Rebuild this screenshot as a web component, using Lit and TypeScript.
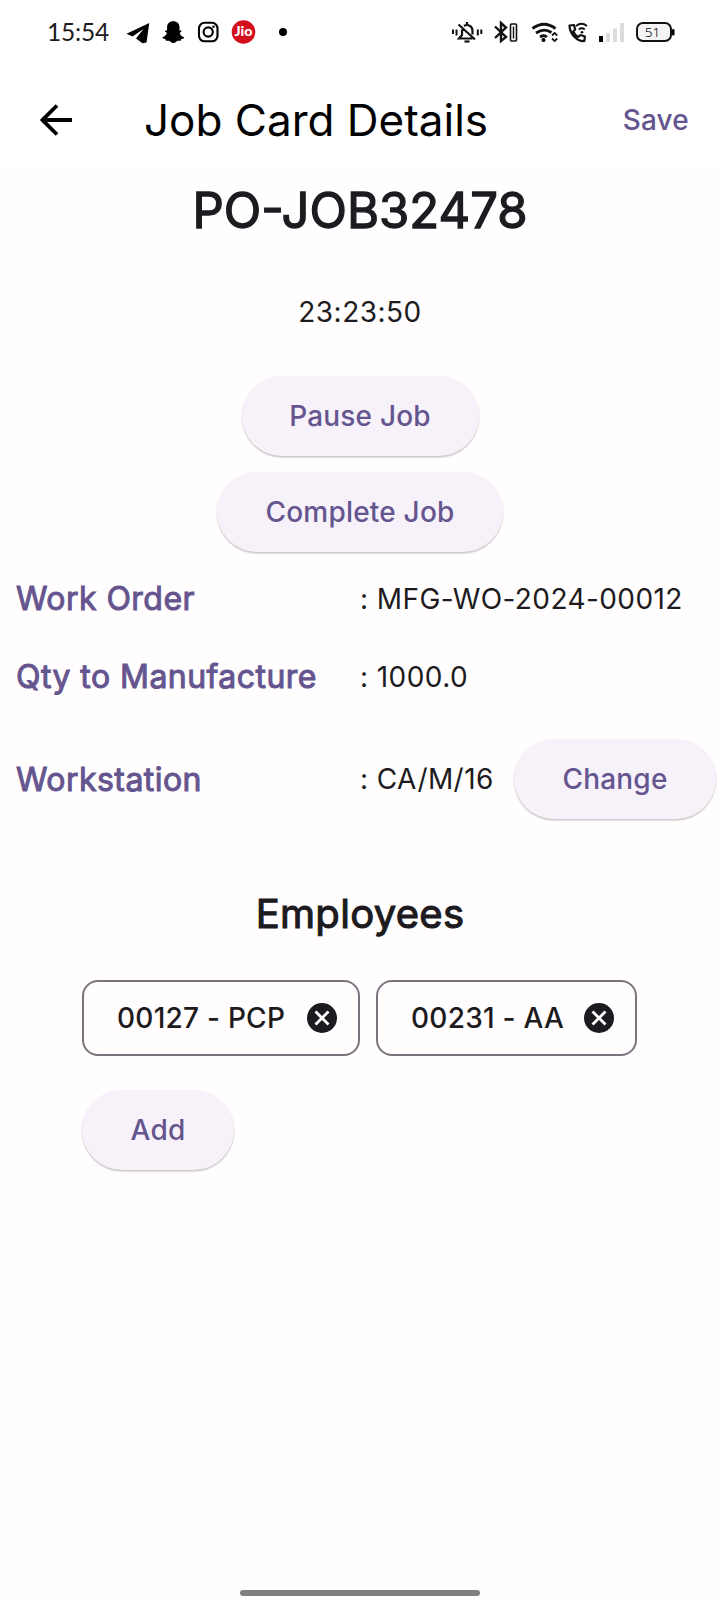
import { LitElement, html, css } from "lit";
import { customElement, property } from "lit/decorators.js";

const font = css`
  :host {
    font-family: Inter, "Noto Sans", sans-serif;
    box-sizing: border-box;
  }
`;

@customElement("status-bar")
class StatusBar extends LitElement {
  static styles = [
    font,
    css`
      :host {
        display: flex;
        justify-content: space-between;
        height: 64px;
        padding: 0 45px 0 47px;
        align-items: center;
      }
      .left { display: flex; align-items: center; }
      .clock { font-family: Lato, sans-serif; font-size: 24.5px; line-height: 62px; width: 79px; letter-spacing: -0.2px; white-space: nowrap; }
      svg { display: block; }
    `,
  ];

  render() {
    return html`
      <div class="left">
        <span class="clock">15:54</span>
        <svg width="174" height="64" viewBox="126 0 174 64">
          <path d="M126.500 33.800 L149.300 23 L146.500 42.500 L142.500 43.300 L136 38.500 L143.500 29 L132.500 36.500 Z" />
          <path d="M173.300 21.200c3.900 0 6.200 2.600 6.200 6v3.200c.8.300 1.600-.2 2.100.5.300.900-1.500 1.300-1.900 2.100.6 2.400 2.500 3.600 4.500 4.200.2 1.300-1.600 1.500-2.900 1.900-.3.700-.3 1.500-.9 1.600-1 .1-2.100-.3-3.200.3-1.100.7-1.900 1.900-3.900 1.900s-2.800-1.200-3.900-1.900c-1.100-.6-2.200-.2-3.200-.3-.6-.1-.6-.9-.9-1.600-1.300-.4-3.100-.6-2.900-1.900 2-.6 3.900-1.800 4.500-4.200-.4-.8-2.200-1.200-1.900-2.100.5-.7 1.300-.2 2.100-.5v-3.200c0-3.400 2.200-6 6.200-6z" />
          <g fill="none" stroke="#000" stroke-width="2.100">
            <rect x="199" y="22.800" width="18.500" height="18.500" rx="5.500" />
            <circle cx="208.200" cy="32" r="4.600" />
          </g>
          <circle cx="213.500" cy="26.800" r="1.300" />
          <circle cx="243.500" cy="32" r="11.800" fill="#d4101f" />
          <text x="243.500" y="36.300" text-anchor="middle" font-family="Lato, sans-serif" font-weight="900" font-size="12.500" textLength="18" lengthAdjust="spacingAndGlyphs" fill="#fff">Jio</text>
          <circle cx="283" cy="32" r="4" />
        </svg>
      </div>
      <svg width="225" height="64" viewBox="450 0 225 64">
        <g fill="none" stroke="#111" stroke-width="2">
          <path d="M453 29.500v4.500M456.500 29.500v6M477.800 29.500v6M481.300 29.500v4.500" />
          <path d="M472.500 38.500h-13.500l3-3.500v-5.500M464 26q3-2 6 0q2.500 1.500 2.500 5v3.500M467 25v-3M458.500 24.500l16.500 15" stroke-width="2.200" />
          <path d="M464.500 41.500h5" stroke-width="2.200" />
          <path d="M495 26.500l11 10.500-5 4V23l5 4.500-11 10.500" stroke-width="2.400" />
          <rect x="510.500" y="24" width="6" height="17" rx="1" stroke-width="1.600" />
          <path d="M513.500 26.500v12" stroke-width="1.400" />
          <path d="M532.500 28.500q11.500-8.500 23 0M536 33q8-5.500 15.500-.5M540 37q4-2.500 7 0" stroke-width="2.800" />
          <path d="M552 35.500l2.600-2.600 2.600 2.600M552 38.500l2.600 2.600 2.600-2.600" stroke-width="1.800" />
          <path d="M569.500 25.500l4.500-.5 1.200 4.500-2 2q1.800 3.800 5 5.500l2.200-2 4.500 1.500-.6 4.500q-5.300.5-10-4.300t-4.800-11.200z" stroke-width="2.200" stroke-linejoin="round" />
          <path d="M576 26q5.500-4.500 11 0M578.800 29.500q3-2.500 6 0" stroke-width="1.800" />
        </g>
        <circle cx="543.500" cy="40" r="2" />
        <circle cx="582" cy="32.300" r="1.300" />
        <rect x="599" y="36" width="4" height="6" />
        <g fill="#dcdcdc">
          <rect x="606" y="33" width="4" height="9" />
          <rect x="613" y="28.500" width="4" height="13.500" />
          <rect x="620" y="23" width="4" height="19" />
        </g>
        <rect x="637" y="23" width="34" height="18" rx="6" fill="#f4f4f4" stroke="#111" stroke-width="2" />
        <rect x="672" y="29" width="2.500" height="6.500" rx="1" />
        <text x="652.500" y="37" text-anchor="middle" font-family="Noto Sans, sans-serif" font-weight="300" font-size="13.500">51</text>
      </svg>
    `;
  }
}

@customElement("pill-button")
class PillButton extends LitElement {
  static styles = [
    font,
    css`
      :host { display: inline-flex; }
      button {
        font: 500 28px/80px Inter, sans-serif;
        letter-spacing: 0.2px;
        height: 80px;
        width: 100%;
        padding: 0;
        border: 0;
        border-radius: 40px;
        color: #65558f;
        background: #f7f2fa;
        white-space: nowrap;
        box-shadow: 0 1.5px 1.5px rgba(0, 0, 0, 0.19), 0 1px 3px rgba(0, 0, 0, 0.05);
      }
    `,
  ];

  render() {
    return html`<button><slot></slot></button>`;
  }
}

@customElement("employee-chip")
class EmployeeChip extends LitElement {
  @property() label = "";

  static styles = [
    font,
    css`
      :host {
        display: flex;
        align-items: center;
        justify-content: space-between;
        height: 76px;
        padding: 0 21px 0 33px;
        border: 2px solid #79747e;
        border-radius: 16px;
      }
      .label { font-size: 28px; font-weight: 500; color: #1d1b20; white-space: nowrap; letter-spacing: 0.25px; }
      svg { display: block; }
    `,
  ];

  render() {
    return html`
      <span class="label">${this.label}</span>
      <svg width="30" height="30" viewBox="0 0 30 30">
        <circle cx="15" cy="15" r="15" fill="#1d1b20" />
        <path d="M8.500 8.500l13 13M21.500 8.500L8.500 21.500" stroke="#fff" stroke-width="2.800" />
      </svg>
    `;
  }
}

@customElement("app-root")
class AppRoot extends LitElement {
  static styles = [
    font,
    css`
      :host {
        display: flex;
        flex-direction: column;
        width: 720px;
        height: 1600px;
        background: #fffdfe;
        color: #1d1b20;
        overflow: hidden;
      }
      .top { background: #fff; height: 168px; }
      .bar {
        display: flex;
        align-items: center;
        height: 112px;
        padding: 0 31px 0 40px;
        box-sizing: border-box;
        color: #000;
      }
      .title { margin-left: 72px; font-size: 44px; flex: 1; white-space: nowrap; }
      .save { font-size: 28px; font-weight: 500; color: #65558f; letter-spacing: 0.2px; }
      .name { height: 85px; line-height: 86px; text-align: center; font-size: 49px; -webkit-text-stroke: 1.3px #1d1b20; }
      .time { height: 123px; line-height: 119px; text-align: center; font-size: 28px; letter-spacing: 0.5px; }
      .actions { display: flex; flex-direction: column; align-items: center; gap: 16px; }
      .pause { width: 237px; }
      .complete { width: 286px; }
      .fields { display: grid; grid-template-columns: 344px auto 1fr; grid-template-rows: 93px 63px 142px; align-items: center; padding: 0 4px 0 16px; }
      .label { font-size: 32px; letter-spacing: 0.45px; color: #65558f; -webkit-text-stroke: 1px #65558f; white-space: nowrap; }
      .value { font-size: 28px; letter-spacing: 0.42px; white-space: nowrap; }
      .wide { grid-column: span 2; }
      .change { width: 202px; justify-self: end; }
      .heading { height: 130px; line-height: 128px; text-align: center; font-size: 40px; letter-spacing: 0.3px; -webkit-text-stroke: 1.1px #1d1b20; }
      .chips { display: flex; gap: 16px; padding-left: 82px; }
      .first { width: 278px; }
      .second { width: 261px; }
      .add { width: 152px; margin: 34px 0 0 82px; }
      .home { margin: auto auto 4px; width: 240px; height: 6px; border-radius: 3px; background: #807e80; }
      svg { display: block; }
    `,
  ];

  render() {
    return html`
      <header class="top">
        <status-bar></status-bar>
        <div class="bar">
          <svg width="32" height="32" viewBox="0 0 32 32" fill="none" stroke="#000" stroke-width="3.800">
            <path d="M32 16H3M17 1.500L2.500 16L17 30.500" />
          </svg>
          <span class="title">Job Card Details</span>
          <span class="save">Save</span>
        </div>
      </header>
      <div class="name">PO-JOB32478</div>
      <div class="time">23:23:50</div>
      <div class="actions">
        <pill-button class="pause">Pause Job</pill-button>
        <pill-button class="complete">Complete Job</pill-button>
      </div>
      <div class="fields">
        <span class="label">Work Order</span>
        <span class="value wide">: MFG-WO-2024-00012</span>
        <span class="label">Qty to Manufacture</span>
        <span class="value wide">: 1000.0</span>
        <span class="label">Workstation</span>
        <span class="value">: CA/M/16</span>
        <pill-button class="change">Change</pill-button>
      </div>
      <div class="heading">Employees</div>
      <div class="chips">
        <employee-chip class="first" label="00127 - PCP"></employee-chip>
        <employee-chip class="second" label="00231 - AA"></employee-chip>
      </div>
      <pill-button class="add">Add</pill-button>
      <div class="home"></div>
    `;
  }
}
